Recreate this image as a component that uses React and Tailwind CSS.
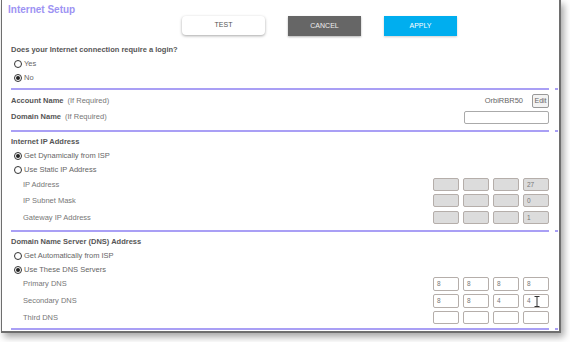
import React from "react";

const font = { fontFamily: '"Liberation Sans", Arial, sans-serif' };

const Radio = ({ checked, label }) => (
  <div className="flex items-center h-[14px] pl-[3px]">
    <span className="w-[8px] h-[8px] rounded-full border border-[#333] bg-white flex items-center justify-center">
      {checked && <span className="w-[4px] h-[4px] rounded-full bg-[#222]" />}
    </span>
    <span className="ml-[2px] text-[7.5px] text-[#666]">{label}</span>
  </div>
);

const Divider = ({ mt }) => (
  <div className={`flex ${mt}`}>
    <div className="ml-[9px] w-[538px] h-[2px] bg-[#a99ff5]" />
    <div className="ml-[6px] w-[3px] h-[2px] bg-[#a99ff5]" />
  </div>
);

const Boxes = ({ values, disabled, cursor }) => (
  <div className="flex h-full gap-[4px]">
    {values.map((v, i) => (
      <div
        key={i}
        className={`relative w-[26px] h-full rounded-[2px] border border-[#b5aeaa] flex items-center pl-[3px] text-[6.5px] text-[#777] ${
          disabled ? "bg-[#dcdcdc]" : "bg-white"
        }`}
      >
        {v}
        {cursor && i === 3 && (
          <svg className="absolute left-[10px] top-[1px]" width="6" height="11" viewBox="0 0 6 11">
            <path d="M0.5 0.5h5M3 0.5v10M0.5 10.5h5" stroke="#333" strokeWidth="1" fill="none" />
          </svg>
        )}
      </div>
    ))}
  </div>
);

const AddrRow = ({ label, values, disabled, cursor, cls }) => (
  <div className={`flex items-center justify-between ${cls}`}>
    <span className="pl-[12px] text-[7.5px] text-[#777]">{label}</span>
    <div className="h-full">
      <Boxes values={values} disabled={disabled} cursor={cursor} />
    </div>
  </div>
);

const Heading = ({ children, cls }) => (
  <div className={`flex items-center h-[14px] text-[7.5px] font-bold text-[#555] ${cls}`}>{children}</div>
);

export default function App() {
  return (
    <div className="w-[570px] h-[342px] bg-white overflow-hidden" style={font}>
      <div className="ml-[1px] w-[560px] h-[333px] bg-white border-l border-r-2 border-b-2 border-[#6e6e6e] shadow-[3px_4px_7px_rgba(0,0,0,0.35)]">
        <div className="pl-[6px] pt-[4px] h-[16px] leading-[11px] text-[10px] font-bold text-[#9d93f3]">
          Internet Setup
        </div>
        <div className="h-[20px] flex pl-[180px] gap-[23px]">
          <button className="w-[83px] h-[19px] rounded-[4px] bg-white shadow-[0_1px_3px_rgba(0,0,0,0.35)] text-[7px] text-[#555]">
            TEST
          </button>
          <button className="w-[73px] h-[20px] bg-[#666666] shadow-[0_1px_2px_rgba(0,0,0,0.3)] text-[7px] text-[#eee]">
            CANCEL
          </button>
          <button className="w-[73px] h-[20px] bg-[#00aeef] shadow-[0_1px_2px_rgba(0,0,0,0.2)] text-[7px] text-white">
            APPLY
          </button>
        </div>

        <div className="ml-[9px] w-[538px]">
          <Heading cls="mt-[7px]">Does your Internet connection require a login?</Heading>
          <Radio label="Yes" />
          <Radio checked label="No" />
        </div>
        <Divider mt="mt-[3px]" />

        <div className="ml-[9px] w-[538px]">
          <div className="mt-[3px] h-[16px] flex items-center justify-between">
            <span className="text-[7.5px] text-[#555]">
              <b>Account Name</b>
              <span className="ml-[4px] text-[#777]">(If Required)</span>
            </span>
            <span className="flex items-center">
              <span className="text-[7.5px] text-[#666]">OrbiRBR50</span>
              <span className="ml-[9px] w-[17px] h-[14px] rounded-[2px] border border-[#999] bg-[#f3f3f3] flex items-center justify-center text-[7px] text-[#666]">
                Edit
              </span>
            </span>
          </div>
          <div className="h-[16px] flex items-center justify-between">
            <span className="text-[7.5px] text-[#555]">
              <b>Domain Name</b>
              <span className="ml-[4px] text-[#777]">(If Required)</span>
            </span>
            <span className="w-[85px] h-[13px] rounded-[2px] border border-[#aaa] bg-white" />
          </div>
        </div>
        <Divider mt="mt-[5px]" />

        <div className="ml-[9px] w-[538px]">
          <Heading cls="mt-[3px]">Internet IP Address</Heading>
          <Radio checked label="Get Dynamically from ISP" />
          <Radio label="Use Static IP Address" />
          <AddrRow cls="mt-[1px] h-[13px]" label="IP Address" values={["", "", "", "27"]} disabled />
          <AddrRow cls="mt-[3px] h-[13px]" label="IP Subnet Mask" values={["", "", "", "0"]} disabled />
          <AddrRow cls="mt-[4px] h-[13px]" label="Gateway IP Address" values={["", "", "", "1"]} disabled />
        </div>
        <Divider mt="mt-[6px]" />

        <div className="ml-[9px] w-[538px]">
          <Heading cls="mt-[3px]">Domain Name Server (DNS) Address</Heading>
          <Radio label="Get Automatically from ISP" />
          <Radio checked label="Use These DNS Servers" />
          <AddrRow cls="h-[14px]" label="Primary DNS" values={["8", "8", "8", "8"]} />
          <AddrRow cls="mt-[3px] h-[14px]" label="Secondary DNS" values={["8", "8", "4", "4"]} cursor />
          <AddrRow cls="mt-[3px] h-[13px]" label="Third DNS" values={["", "", "", ""]} />
        </div>
        <Divider mt="mt-[4px]" />
      </div>
    </div>
  );
}
